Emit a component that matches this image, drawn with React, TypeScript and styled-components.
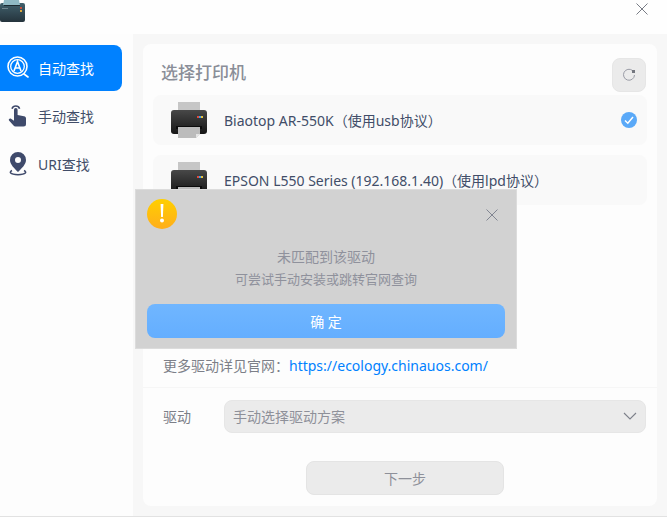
import styled, { createGlobalStyle } from "styled-components";

const GlobalStyle = createGlobalStyle`
  html, body {
    margin: 0;
    padding: 0;
    background: #fff;
    font-family: "Noto Sans", "Noto Sans CJK SC", sans-serif;
  }
`;

function PrinterIcon() {
  return (
    <svg width="38" height="38" viewBox="0 0 38 38">
      <defs>
        <linearGradient id="printerBody" x1="0" y1="0" x2="0" y2="1">
          <stop offset="0" stopColor="#484848" />
          <stop offset="1" stopColor="#151515" />
        </linearGradient>
      </defs>
      <rect x="8" y="1" width="22" height="9" fill="#c6c6c6" />
      <rect x="1" y="9" width="36" height="24" rx="3" fill="url(#printerBody)" />
      <rect x="27" y="15" width="2" height="2" fill="#e0483c" />
      <rect x="29" y="15" width="2" height="2" fill="#3f9ae0" />
      <rect x="31" y="15" width="2" height="2" fill="#e8c23c" />
      <rect x="6" y="25" width="26" height="3" fill="#0c0c0c" />
      <path d="M8 26h22v7l-4 4H8z" fill="#bcbcbc" />
      <path d="M30 33l-4 4v-4z" fill="#e6e6e6" />
    </svg>
  );
}

function AutoIcon() {
  return (
    <svg width="22" height="24" viewBox="0 0 22 24" fill="none" stroke="#fff">
      <circle cx="10.5" cy="10.5" r="9.5" strokeWidth="1.6" />
      <circle cx="10.5" cy="10.5" r="6.8" strokeWidth="1.3" />
      <path d="M7 15l3.5-9.5L14 15M8.2 12h4.6" strokeWidth="1.6" />
      <path d="M17 18l4 3" strokeWidth="1.6" strokeLinecap="round" />
    </svg>
  );
}

function HandIcon() {
  return (
    <svg width="20" height="22" viewBox="0 0 20 22" fill="#3f4a6b">
      <path d="M4 3.8a4 4 0 0 1 7.6 0" fill="none" stroke="#3f4a6b" strokeWidth="1.6" />
      <path d="M6 4.800a1.800 1.800 0 0 1 3.600 0v5.200l6.400 1.200c1.300.3 2 1 2 2.400V19a2.500 2.500 0 0 1-2.500 2.500H7.500a2.500 2.500 0 0 1-2-1L1 15.500c-.8-1.200.8-2.700 2-1.800l3 2.100z" />
    </svg>
  );
}

function PinIcon() {
  return (
    <svg width="20" height="24" viewBox="0 0 20 24">
      <path
        fillRule="evenodd"
        fill="#3f4a6b"
        d="M10 0a8 8 0 0 1 8 8c0 4.500-4.500 8.500-8 12C6.500 16.500 2 12.500 2 8a8 8 0 0 1 8-8zm0 5a3 3 0 1 0 0 6 3 3 0 0 0 0-6z"
      />
      <path d="M4 18.500C1 20 1.500 22.500 10 22.800c8.500-.3 9-2.800 6-4.300" fill="none" stroke="#3f4a6b" strokeWidth="1.500" />
    </svg>
  );
}

function CloseIcon({ color, size }: { color: string; size: number }) {
  return (
    <svg width={size} height={size} viewBox="0 0 12 12" stroke={color} strokeWidth="0.8" fill="none">
      <path d="M0.500 0.500l11 11M11.500 0.500l-11 11" />
    </svg>
  );
}

export default function App() {
  return (
    <>
      <GlobalStyle />
      <Window>
        <TitleBar>
          <AppLogo>
            <svg width="25" height="22" viewBox="0 0 25 22">
              <defs>
                <linearGradient id="logoBody" x1="0" y1="0" x2="0" y2="1">
                  <stop offset="0" stopColor="#41606c" />
                  <stop offset="1" stopColor="#24333c" />
                </linearGradient>
              </defs>
              <rect x="0" y="3" width="25" height="19" rx="2" fill="url(#logoBody)" />
              <path d="M4 0h15l1 5H3z" fill="#8fb9c4" />
              <rect x="4" y="5" width="16" height="1" fill="#1c2a31" />
              <rect x="20" y="7" width="2" height="2" fill="#c8503c" />
              <rect x="20" y="10" width="2" height="2" fill="#d9a83c" />
              <rect x="2" y="8" width="6" height="1" fill="#71868f" />
            </svg>
          </AppLogo>
          <TitleClose>
            <CloseIcon color="#555a66" size={12} />
          </TitleClose>
        </TitleBar>
        <Body>
          <Sidebar>
            <NavItem $active>
              <NavIcon><AutoIcon /></NavIcon>
              自动查找
            </NavItem>
            <NavItem>
              <NavIcon><HandIcon /></NavIcon>
              手动查找
            </NavItem>
            <NavItem>
              <NavIcon><PinIcon /></NavIcon>
              URI查找
            </NavItem>
          </Sidebar>
          <Main>
            <Card>
              <CardHeader>
                <Title>选择打印机</Title>
                <RefreshButton>
                  <svg width="14" height="14" viewBox="0 0 14 14" fill="none">
                    <path d="M10.500 2.500A5.500 5.500 0 1 0 12.500 7" stroke="#9a9ca6" strokeWidth="1" />
                    <rect x="10" y="2" width="3" height="3" fill="#74777f" />
                  </svg>
                </RefreshButton>
              </CardHeader>
              <PrinterList>
                <PrinterRow>
                  <PrinterIcon />
                  <PrinterName>Biaotop AR-550K（使用usb协议）</PrinterName>
                  <CheckMark>
                    <svg width="16" height="16" viewBox="0 0 16 16">
                      <circle cx="8" cy="8" r="8" fill="#5aa9f8" />
                      <path d="M4 8.500l2.800 2.700L12 5" fill="none" stroke="#fff" strokeWidth="1.500" />
                    </svg>
                  </CheckMark>
                </PrinterRow>
                <PrinterRow>
                  <PrinterIcon />
                  <PrinterName>EPSON L550 Series (192.168.1.40)（使用lpd协议）</PrinterName>
                </PrinterRow>
              </PrinterList>
              <MoreDrivers>
                更多驱动详见官网：<DriverLink>https://ecology.chinauos.com/</DriverLink>
              </MoreDrivers>
              <Divider />
              <DriverRow>
                <DriverLabel>驱动</DriverLabel>
                <DriverSelect>
                  <span>手动选择驱动方案</span>
                  <svg width="14" height="8" viewBox="0 0 14 8" fill="none" stroke="#7d808a" strokeWidth="1.100">
                    <path d="M1 1l6 6 6-6" />
                  </svg>
                </DriverSelect>
              </DriverRow>
              <Footer>
                <NextButton>下一步</NextButton>
              </Footer>
            </Card>
          </Main>
        </Body>
        <BottomStrip />
        <Dialog>
          <DialogHeader>
            <svg width="30" height="30" viewBox="0 0 30 30">
              <defs>
                <linearGradient id="warnFill" x1="0" y1="0" x2="0" y2="1">
                  <stop offset="0" stopColor="#ffcf00" />
                  <stop offset="1" stopColor="#ffae1c" />
                </linearGradient>
              </defs>
              <circle cx="15" cy="15" r="15" fill="url(#warnFill)" />
              <path d="M13.600 5h2.800l-.5 13h-1.800z" fill="#fff" />
              <circle cx="15" cy="21.500" r="2" fill="#fff" />
            </svg>
            <DialogClose>
              <CloseIcon color="#6c7180" size={12} />
            </DialogClose>
          </DialogHeader>
          <DialogMessage>
            <MessageTitle>未匹配到该驱动</MessageTitle>
            <MessageHint>可尝试手动安装或跳转官网查询</MessageHint>
          </DialogMessage>
          <ConfirmButton>确 定</ConfirmButton>
        </Dialog>
      </Window>
    </>
  );
}

const Window = styled.div`
  position: relative;
  width: 667px;
  height: 521px;
  overflow: hidden;
  display: flex;
  flex-direction: column;
  background: #fff;
`;

const TitleBar = styled.div`
  height: 34px;
  flex: none;
  display: flex;
  justify-content: space-between;
  background: #fefefe;
`;

const AppLogo = styled.div`
  height: 22px;
  display: flex;
`;

const TitleClose = styled.div`
  display: flex;
  align-items: flex-start;
  padding: 3px 19px 0 0;
`;

const Body = styled.div`
  flex: 1;
  display: flex;
  min-height: 0;
`;

const Sidebar = styled.nav`
  width: 133px;
  flex: none;
  display: flex;
  flex-direction: column;
  gap: 2px;
  padding-top: 11px;
  background: #fdfdfd;
  box-sizing: border-box;
`;

const NavItem = styled.div<{ $active?: boolean }>`
  width: 122px;
  height: 46px;
  box-sizing: border-box;
  display: flex;
  align-items: center;
  gap: 9px;
  padding-left: 7px;
  border-radius: 0 8px 8px 0;
  font-size: 14px;
  background: ${(props) => (props.$active ? "#0081ff" : "transparent")};
  color: ${(props) => (props.$active ? "#fff" : "#414d68")};
`;

const NavIcon = styled.div`
  width: 22px;
  height: 24px;
  display: flex;
  align-items: center;
  justify-content: center;
`;

const Main = styled.main`
  flex: 1;
  padding: 10px 10px 10px;
  background: #f7f7f7;
  display: flex;
  min-width: 0;
`;

const Card = styled.section`
  flex: 1;
  display: flex;
  flex-direction: column;
  background: #fdfdfd;
  border-radius: 8px;
`;

const CardHeader = styled.div`
  height: 51px;
  display: flex;
  align-items: center;
  justify-content: space-between;
  padding: 0 11px 0 18px;
`;

const Title = styled.h2`
  margin: 0;
  padding-top: 4px;
  font-size: 17px;
  font-weight: 500;
  color: #8a8e98;
`;

const RefreshButton = styled.button`
  width: 34px;
  height: 34px;
  margin-top: 11px;
  padding: 0;
  display: flex;
  align-items: center;
  justify-content: center;
  border: 1px solid #e6e6e6;
  border-radius: 8px;
  background: #ebebeb;
`;

const PrinterList = styled.div`
  display: flex;
  flex-direction: column;
  gap: 10px;
  margin: 0 10px;
  height: 246px;
`;

const PrinterRow = styled.div`
  height: 50px;
  flex: none;
  display: flex;
  align-items: center;
  gap: 16px;
  padding: 0 10px 0 17px;
  border-radius: 8px;
  background: #f9f9f9;
  overflow: hidden;
`;

const PrinterName = styled.span`
  font-size: 14px;
  color: #414d68;
`;

const CheckMark = styled.span`
  margin-left: auto;
  display: flex;
`;

const MoreDrivers = styled.div`
  height: 46px;
  box-sizing: border-box;
  display: flex;
  align-items: center;
  padding: 2px 0 0 20px;
  font-size: 14px;
  color: #7c7f88;
`;

const DriverLink = styled.a`
  color: #0081ff;
`;

const Divider = styled.div`
  height: 1px;
  background: #f6f6f6;
`;

const DriverRow = styled.div`
  display: flex;
  align-items: center;
  margin-top: 12px;
  padding: 0 11px 0 20px;
`;

const DriverLabel = styled.span`
  width: 61px;
  padding-bottom: 2px;
  font-size: 14px;
  color: #7c7f88;
`;

const DriverSelect = styled.div`
  flex: 1;
  height: 33px;
  box-sizing: border-box;
  display: flex;
  align-items: center;
  justify-content: space-between;
  padding: 0 8px 2px 8px;
  border: 1px solid #e6e6e6;
  border-radius: 8px;
  background: #ebebeb;
  font-size: 14px;
  color: #8e9099;
`;

const Footer = styled.div`
  display: flex;
  justify-content: center;
  margin-top: 28px;
  padding-left: 10px;
`;

const NextButton = styled.button`
  width: 198px;
  height: 34px;
  border: 1px solid #e4e4e4;
  border-radius: 8px;
  background: #ebebeb;
  font-family: inherit;
  font-size: 14px;
  color: #8e9099;
`;

const BottomStrip = styled.div`
  height: 5px;
  flex: none;
  box-sizing: border-box;
  border-top: 1px solid #e2e2e2;
  background: #fff;
`;

const Dialog = styled.div`
  position: absolute;
  left: 135px;
  top: 189px;
  width: 382px;
  height: 160px;
  box-sizing: border-box;
  padding: 9px 11px 10px;
  display: flex;
  flex-direction: column;
  border: 1px solid #dcdcdc;
  background: #d2d2d2;
`;

const DialogHeader = styled.div`
  display: flex;
  justify-content: space-between;
  height: 30px;
`;

const DialogClose = styled.div`
  display: flex;
  align-items: flex-start;
  padding: 10px 7px 0 0;
`;

const DialogMessage = styled.div`
  flex: 1;
  padding-top: 17px;
  text-align: center;
  color: #8f919c;
`;

const MessageTitle = styled.div`
  font-size: 14px;
  line-height: 22px;
`;

const MessageHint = styled.div`
  font-size: 13px;
  line-height: 22px;
`;

const ConfirmButton = styled.button`
  height: 34px;
  flex: none;
  border: none;
  border-radius: 8px;
  background: linear-gradient(#70b6ff, #64aeff);
  font-family: inherit;
  font-size: 14px;
  color: #fff;
`;
